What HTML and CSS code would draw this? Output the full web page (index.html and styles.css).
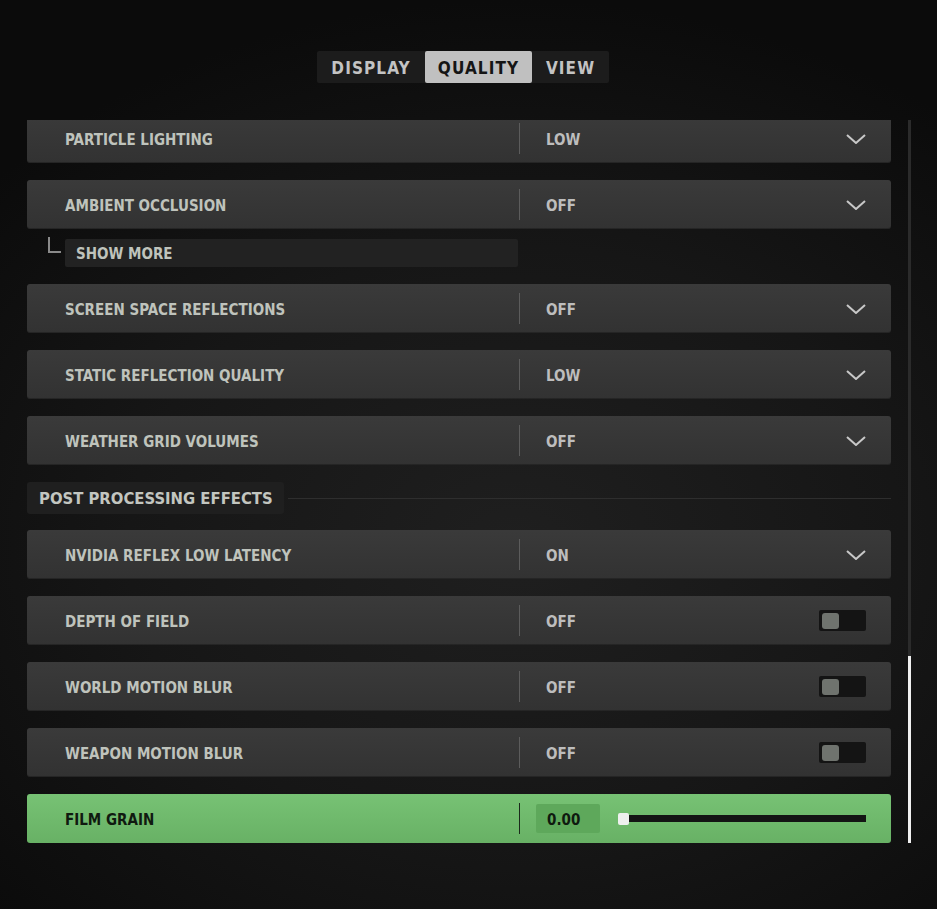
FILE: index.html
```html
<!DOCTYPE html>
<html>
<head>
<meta charset="utf-8">
<link rel="stylesheet" href="styles.css">
</head>
<body>
<div class="page">
  <div class="tabs">
    <div class="tab tab-display">DISPLAY</div>
    <div class="tab tab-quality active">QUALITY</div>
    <div class="tab tab-view">VIEW</div>
  </div>
  <div class="content">
    <div class="list">
      <div class="inner">
        <div class="row first">
          <div class="label">PARTICLE LIGHTING</div><div class="sep"></div><div class="value">LOW</div>
          <svg class="chev" viewBox="0 0 20 10"><path d="M1 1 L10 9 L19 1" /></svg>
        </div>
        <div class="row">
          <div class="label">AMBIENT OCCLUSION</div><div class="sep"></div><div class="value">OFF</div>
          <svg class="chev" viewBox="0 0 20 10"><path d="M1 1 L10 9 L19 1" /></svg>
        </div>
        <div class="showmore">
          <div class="elbow"></div>
          <div class="sm-box">SHOW MORE</div>
        </div>
        <div class="row">
          <div class="label">SCREEN SPACE REFLECTIONS</div><div class="sep"></div><div class="value">OFF</div>
          <svg class="chev" viewBox="0 0 20 10"><path d="M1 1 L10 9 L19 1" /></svg>
        </div>
        <div class="row">
          <div class="label">STATIC REFLECTION QUALITY</div><div class="sep"></div><div class="value">LOW</div>
          <svg class="chev" viewBox="0 0 20 10"><path d="M1 1 L10 9 L19 1" /></svg>
        </div>
        <div class="row">
          <div class="label">WEATHER GRID VOLUMES</div><div class="sep"></div><div class="value">OFF</div>
          <svg class="chev" viewBox="0 0 20 10"><path d="M1 1 L10 9 L19 1" /></svg>
        </div>
        <div class="section">
          <div class="section-title">POST PROCESSING EFFECTS</div>
          <div class="section-line"></div>
        </div>
        <div class="row">
          <div class="label">NVIDIA REFLEX LOW LATENCY</div><div class="sep"></div><div class="value">ON</div>
          <svg class="chev" viewBox="0 0 20 10"><path d="M1 1 L10 9 L19 1" /></svg>
        </div>
        <div class="row">
          <div class="label">DEPTH OF FIELD</div><div class="sep"></div><div class="value">OFF</div>
          <div class="toggle"><div class="knob"></div></div>
        </div>
        <div class="row">
          <div class="label">WORLD MOTION BLUR</div><div class="sep"></div><div class="value">OFF</div>
          <div class="toggle"><div class="knob"></div></div>
        </div>
        <div class="row">
          <div class="label">WEAPON MOTION BLUR</div><div class="sep"></div><div class="value">OFF</div>
          <div class="toggle"><div class="knob"></div></div>
        </div>
        <div class="row selected">
          <div class="label">FILM GRAIN</div><div class="sep"></div>
          <div class="numbox">0.00</div>
          <div class="slider"><div class="handle"></div><div class="track"></div></div>
        </div>
      </div>
    </div>
    <div class="scrollbar"><div class="thumb"></div></div>
  </div>
</div>
</body>
</html>
```
FILE: styles.css
```css
html, body {
  margin: 0;
  padding: 0;
  height: 100%;
}
body {
  background: radial-gradient(ellipse 75% 60% at 55% 60%, #1f1f1f 0%, #161616 55%, #0b0b0b 100%);
  font-family: "DejaVu Sans Condensed", "DejaVu Sans", sans-serif;
  font-weight: bold;
  color: #bfc3bc;
  overflow: hidden;
  white-space: nowrap;
}
.page {
  padding-top: 51px;
}
.tabs {
  display: flex;
  margin-left: 317px;
  width: 292px;
  height: 32px;
  background: #1c1c1c;
  border-radius: 2px;
}
.tab {
  display: flex;
  align-items: center;
  justify-content: center;
  padding-top: 1px;
  box-sizing: border-box;
  font-size: 17px;
  letter-spacing: 1.1px;
  color: #c3c3c3;
}
.tab-display { width: 108px; }
.tab-quality { width: 107px; }
.tab-view { width: 77px; }
.tab.active {
  background: #c0c0c0;
  color: #151515;
  border-radius: 2px;
}
.content {
  display: flex;
  margin-top: 37px;
  margin-left: 27px;
}
.list {
  width: 864px;
  height: 723px;
  overflow: hidden;
}
.inner {
  display: flex;
  flex-direction: column;
  gap: 17px;
  margin-top: -6px;
}
.row {
  height: 49px;
  flex: none;
  display: flex;
  align-items: center;
  padding-left: 38px;
  padding-right: 25px;
  box-sizing: border-box;
  border-radius: 3px;
  background: linear-gradient(#3a3a3a, #323232);
  box-shadow: inset 0 -1px 0 rgba(0,0,0,0.25);
}
.label {
  width: 454px;
  padding-top: 3px;
  font-size: 15px;
  color: #bfc3bc;
}
.sep {
  width: 1px;
  height: 31px;
  background: #5c5c5c;
}
.value {
  margin-left: 26px;
  padding-top: 3px;
  flex: 1;
  font-size: 15px;
  color: #bdbdbd;
}
.chev {
  width: 20px;
  height: 10px;
}
.chev path {
  fill: none;
  stroke: #c8c8c8;
  stroke-width: 2;
}
.showmore {
  display: flex;
  align-items: flex-start;
  margin-top: -7px;
  height: 28px;
}
.elbow {
  width: 13px;
  height: 16px;
  margin-left: 21px;
  margin-top: -2px;
  border-left: 2px solid #8a8a8a;
  border-bottom: 2px solid #8a8a8a;
  box-sizing: border-box;
}
.sm-box {
  margin-left: 4px;
  width: 453px;
  height: 28px;
  box-sizing: border-box;
  padding-left: 11px;
  padding-top: 1px;
  display: flex;
  align-items: center;
  background: #222222;
  border-radius: 2px;
  font-size: 15px;
  color: #bfc3bc;
}
.section {
  display: flex;
  align-items: center;
  height: 32px;
  margin-bottom: -1px;
}
.section-title {
  height: 32px;
  width: 257px;
  box-sizing: border-box;
  padding-left: 12px;
  padding-top: 1px;
  display: flex;
  align-items: center;
  background: #1f1f1f;
  border-radius: 3px;
  font-size: 16.5px;
  color: #c3c6c0;
}
.section-line {
  flex: 1;
  height: 1px;
  margin-left: 4px;
  background: #2e2e2e;
}
.toggle {
  width: 47px;
  height: 21px;
  background: #141414;
  border-radius: 2px;
  display: flex;
  align-items: center;
  padding-left: 3px;
  box-sizing: border-box;
}
.knob {
  width: 17px;
  height: 16px;
  background: #6f736e;
  border-radius: 3px;
}
.row.selected {
  background: linear-gradient(#77c274, #68b165);
  box-shadow: none;
}
.row.selected .label {
  color: #101a10;
}
.row.selected .sep {
  background: #1b2a1b;
}
.numbox {
  margin-left: 16px;
  width: 64px;
  height: 29px;
  box-sizing: border-box;
  padding-left: 11px;
  padding-top: 2px;
  display: flex;
  align-items: center;
  background: #5ea85b;
  border-radius: 2px;
  font-size: 15px;
  color: #0f1a0f;
}
.slider {
  flex: 1;
  display: flex;
  align-items: center;
  margin-left: 18px;
}
.handle {
  width: 11px;
  height: 12px;
  background: #eef0ee;
  border-radius: 2px;
}
.track {
  flex: 1;
  height: 7px;
  background: #141414;
}
.scrollbar {
  margin-left: 17px;
  width: 3px;
  height: 723px;
  background: #2b2b2b;
  display: flex;
  flex-direction: column;
  justify-content: flex-end;
}
.thumb {
  height: 187px;
  background: #f0f0f0;
}
```
